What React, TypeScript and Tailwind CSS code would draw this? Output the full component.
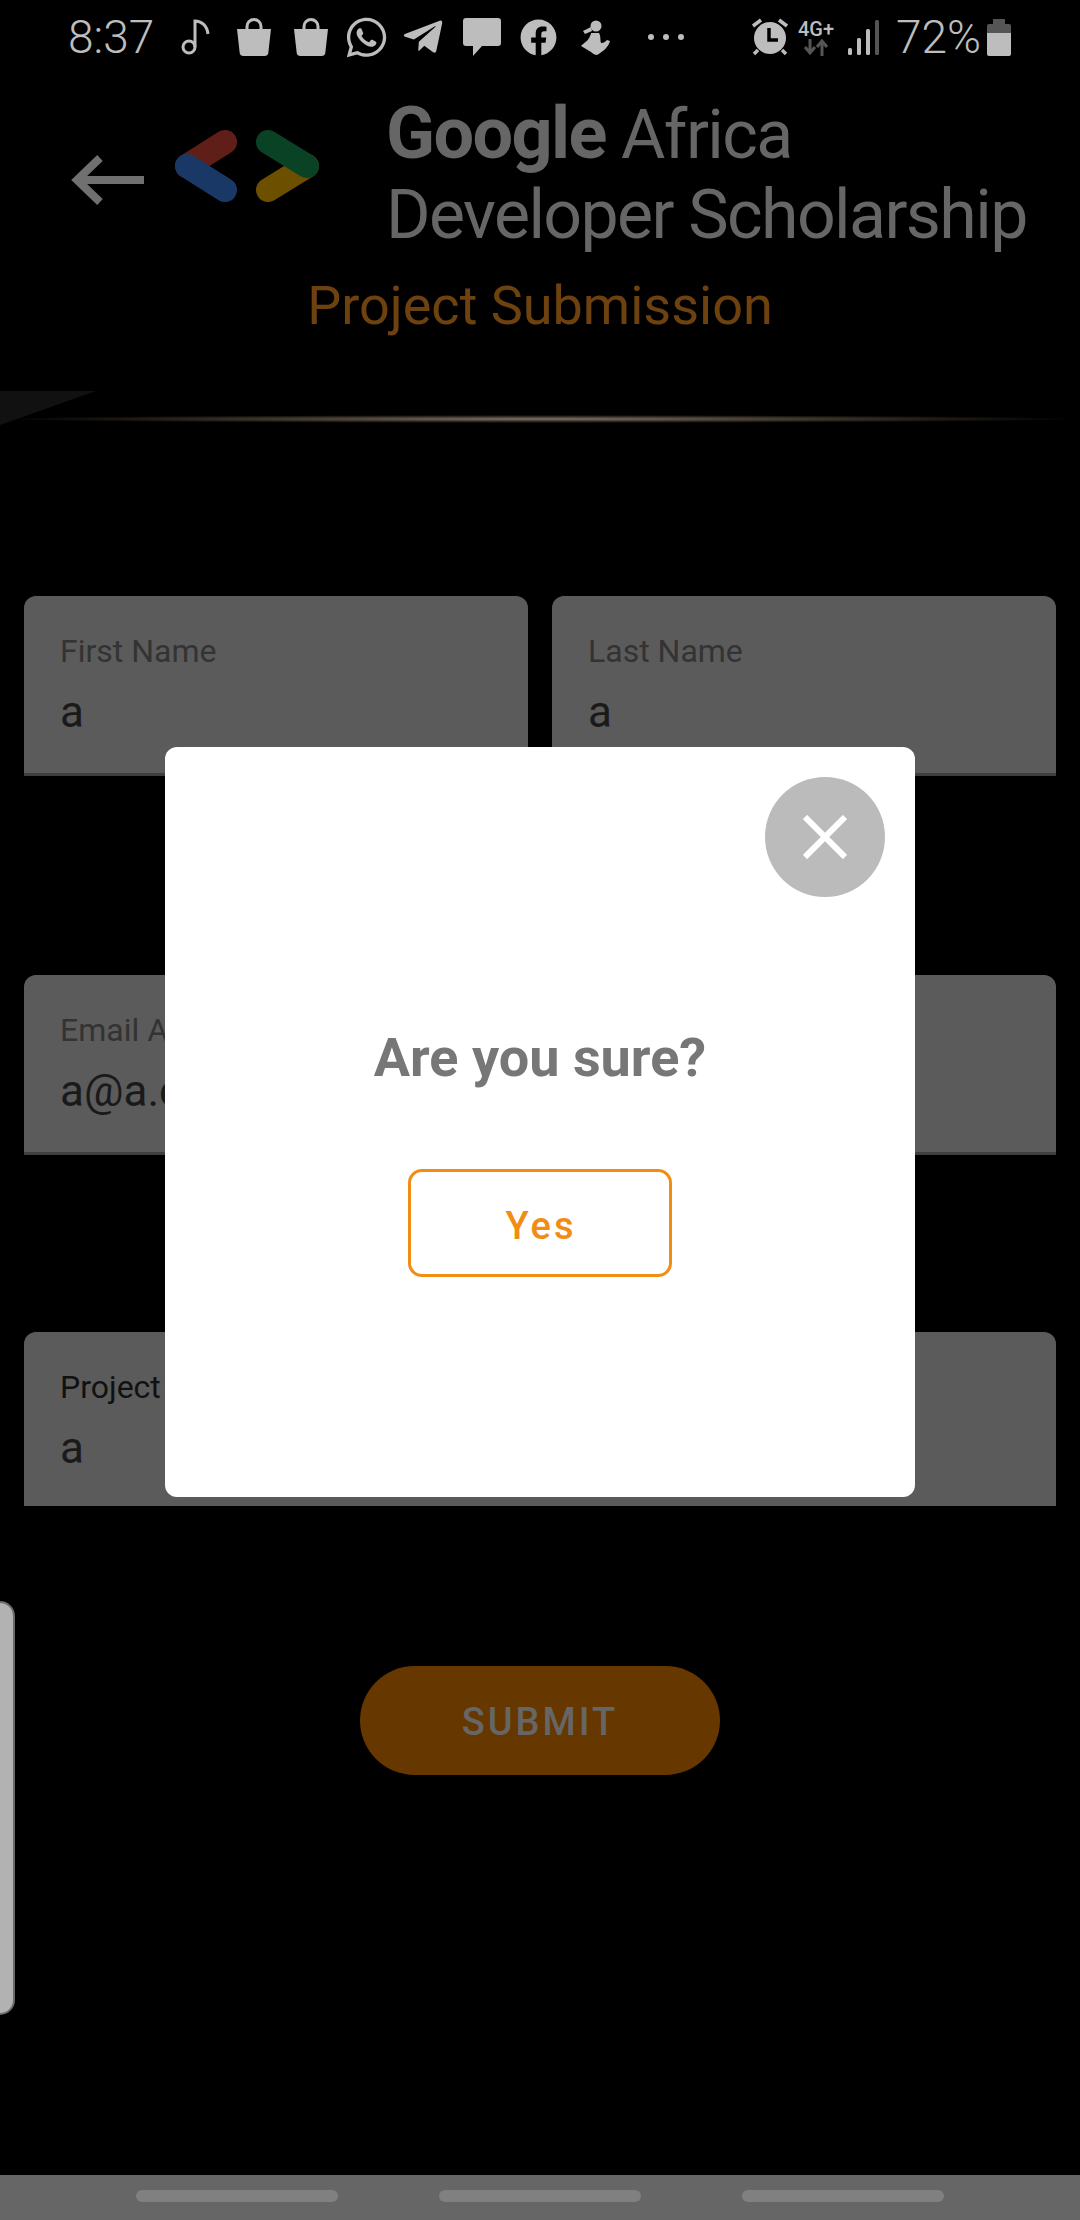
import { FaWhatsapp, FaTelegramPlane, FaFacebook } from "react-icons/fa";

function Bag() {
  return (
    <svg width="36" height="38" viewBox="0 0 36 38" className="shrink-0">
      <path d="M11 12V8.500a7 7 0 0 1 14 0V12" fill="none" stroke="#bdbdbd" strokeWidth="3" />
      <path d="M1 11h34l-2.600 23a4 4 0 0 1-4 4H7.600a4 4 0 0 1-4-4z" fill="#bdbdbd" />
    </svg>
  );
}

function StatusBar() {
  return (
    <div className="flex h-[74px] items-center pl-[68px] text-[#bdbdbd]">
      <span className="w-[84px] text-[46px] leading-[74px] font-light whitespace-nowrap">8:37</span>
      <svg width="29" height="37" viewBox="0 0 29 37" className="ml-[29px] shrink-0">
        <circle cx="8" cy="28" r="6" fill="none" stroke="#bdbdbd" strokeWidth="3" />
        <path d="M14 28V2c6 0 12 4 13 13" fill="none" stroke="#bdbdbd" strokeWidth="3" />
      </svg>
      <div className="ml-[26px]"><Bag /></div>
      <div className="ml-[21px]"><Bag /></div>
      <FaWhatsapp className="ml-[15px] shrink-0 text-[45px]" />
      <FaTelegramPlane className="ml-[12px] shrink-0 text-[44px]" />
      <svg width="38" height="38" viewBox="0 0 38 38" className="ml-[18px] shrink-0">
        <path d="M3 0h32a3 3 0 0 1 3 3v22a3 3 0 0 1-3 3H19l-9 10v-10H3a3 3 0 0 1-3-3V3a3 3 0 0 1 3-3z" fill="#bdbdbd" />
      </svg>
      <FaFacebook className="ml-[19px] shrink-0 text-[37px]" />
      <svg width="30" height="35" viewBox="0 0 30 35" className="ml-[23px] shrink-0">
        <circle cx="16" cy="6" r="5.500" fill="#bdbdbd" />
        <path d="M3 11l8-4 1 4-7 3z" fill="#bdbdbd" />
        <path d="M11 13h8c2 3 1 7 2 10 3 0 4-1 6-3l3 1c-1 5-6 10-13 14-2 0-4-1-6-3l-10-6c3-3 8-6 9-10 1-2 1-2 1-3z" fill="#bdbdbd" />
      </svg>
      <div className="ml-[38px] flex gap-[9px]">
        <span className="size-[6px] rounded-full bg-[#bdbdbd]" />
        <span className="size-[6px] rounded-full bg-[#bdbdbd]" />
        <span className="size-[6px] rounded-full bg-[#bdbdbd]" />
      </div>
      <svg width="38" height="38" viewBox="0 0 38 38" className="ml-[67px] shrink-0">
        <circle cx="19" cy="20" r="16" fill="#bdbdbd" />
        <path d="M18 10v12h9" fill="none" stroke="#000" strokeWidth="3.500" />
        <path d="M10 2L2 8M28 2l8 6M7 32l-4 4M31 32l4 4" fill="none" stroke="#bdbdbd" strokeWidth="3.500" />
      </svg>
      <div className="ml-[9px] flex w-[36px] flex-col items-center">
        <span className="text-[20px] leading-[20px] font-medium whitespace-nowrap">4G+</span>
        <svg width="26" height="17" viewBox="0 0 26 17">
          <path d="M7 0v13M2 8l5 6 5-6" fill="none" stroke="#555" strokeWidth="3" />
          <path d="M19 17V3M14 8l5-6 5 6" fill="none" stroke="#555" strokeWidth="3" />
        </svg>
      </div>
      <svg width="32" height="35" viewBox="0 0 32 35" className="ml-[14px] shrink-0">
        <rect x="0" y="28" width="4" height="7" rx="1.500" fill="#bdbdbd" />
        <rect x="9" y="18" width="4" height="17" rx="1.500" fill="#bdbdbd" />
        <rect x="18" y="9" width="4" height="26" rx="1.500" fill="#bdbdbd" />
        <rect x="27" y="0" width="4" height="35" rx="1.500" fill="#555" />
      </svg>
      <span className="ml-[16px] w-[85px] text-[46px] leading-[74px] font-light whitespace-nowrap">72%</span>
      <svg width="24" height="37" viewBox="0 0 24 37" className="ml-[6px] shrink-0">
        <path d="M6 0h12v5h4a2 2 0 0 1 2 2v7H0V7a2 2 0 0 1 2-2h4z" fill="#555" />
        <path d="M0 14h24v21a2 2 0 0 1-2 2H2a2 2 0 0 1-2-2z" fill="#bdbdbd" />
      </svg>
    </div>
  );
}

function Header() {
  return (
    <div className="flex h-[202px] items-start">
      <svg width="74" height="50" viewBox="0 0 74 50" className="mt-[81px] ml-[71px] shrink-0">
        <path d="M73 25H6M29 3L6 25l23 22" fill="none" stroke="#707070" strokeWidth="8" />
      </svg>
      <svg width="150" height="76" viewBox="0 0 150 76" className="mt-[54px] ml-[28px] shrink-0">
        <g fill="none" strokeWidth="24" strokeLinecap="round">
          <path d="M14 38L52 14" stroke="#5f1f18" />
          <path d="M14 38L52 62" stroke="#1a3866" />
          <path d="M95 62L134 38" stroke="#6c5000" />
          <path d="M95 14L134 38" stroke="#0a4225" />
        </g>
      </svg>
      <div className="mt-[20px] ml-[63px] text-[68px] leading-[80px] font-normal tracking-[-1.600px] whitespace-nowrap text-[#666666]">
        <div>
          <span className="text-[72px] font-bold">Google</span> Africa
        </div>
        <div>Developer Scholarship</div>
      </div>
    </div>
  );
}

function Field({ label, value, labelTone, underline }: { label: string; value: string; labelTone: string; underline: boolean }) {
  return (
    <div className={`flex flex-col rounded-t-[12px] bg-[#5b5b5b] pt-[37px] pl-[36px] ${underline ? "h-[180px] border-b-[3px] border-[#3f3f3f]" : "h-[174px]"}`}>
      <span className={`text-[32px] leading-[36px] ${labelTone}`}>{label}</span>
      <span className="mt-[19px] text-[44px] leading-[48px] text-[#1a1a1a]">{value}</span>
    </div>
  );
}

export default function App() {
  return (
    <div className="relative flex h-[2220px] w-[1080px] flex-col overflow-hidden bg-black [font-family:Roboto,sans-serif]">
      <StatusBar />
      <Header />
      <h1 className="text-center text-[54px] leading-[60px] font-normal text-[#6e420f]">Project Submission</h1>

      <div className="relative mt-[79px] h-[8px] bg-[radial-gradient(ellipse_closest-side,#7a756a_0%,#4a4238_40%,#1a1510_80%,#000000_100%)]">
        <div className="absolute top-[-24px] left-0 h-[34px] w-[96px] bg-[#111111] [clip-path:polygon(0_0,100%_0,0_100%)]" />
      </div>

      <div className="mt-[173px] flex flex-col px-[24px]">
        <div className="grid grid-cols-2 gap-x-[24px]">
          <Field label="First Name" value="a" labelTone="text-[#333333]" underline />
          <Field label="Last Name" value="a" labelTone="text-[#333333]" underline />
        </div>
        <div className="mt-[199px]">
          <Field label="Email Address" value="a@a.com" labelTone="text-[#333333]" underline />
        </div>
        <div className="mt-[177px]">
          <Field label="Project Link" value="a" labelTone="text-[#111111]" underline={false} />
        </div>
      </div>

      <div className="mt-[160px] flex justify-center">
        <div className="flex h-[109px] w-[360px] items-center justify-center rounded-full bg-[#663800] pt-[3px] text-[38px] font-medium tracking-[3px] text-[#666666]">
          SUBMIT
        </div>
      </div>

      <div className="mt-auto flex h-[45px] items-center justify-center gap-[101px] bg-[#666666] pb-[4px]">
        <span className="h-[12px] w-[202px] rounded-full bg-[#808080]" />
        <span className="h-[12px] w-[202px] rounded-full bg-[#808080]" />
        <span className="h-[12px] w-[202px] rounded-full bg-[#808080]" />
      </div>

      <div className="absolute top-[1601px] left-0 h-[414px] w-[15px] rounded-r-[16px] border-2 border-l-0 border-[#6a6a6a] bg-[#b2b2b2]" />

      <div className="absolute top-[747px] left-[165px] flex h-[750px] w-[750px] flex-col items-center rounded-[12px] bg-white">
        <div className="absolute top-[30px] right-[30px] flex size-[120px] items-center justify-center rounded-full bg-[#bbbbbb]">
          <svg width="44" height="44" viewBox="0 0 44 44">
            <path d="M2 2l40 40M42 2L2 42" fill="none" stroke="#ffffff" strokeWidth="6" />
          </svg>
        </div>
        <h2 className="mt-[278px] text-[54px] leading-[66px] font-bold text-[#777777]">Are you sure?</h2>
        <div className="mt-[78px] flex h-[108px] w-[264px] items-center justify-center rounded-[14px] border-[3px] border-[#f28c13] pt-[6px] pl-[2px] text-[38px] font-medium tracking-[3px] text-[#f28c13]">
          Yes
        </div>
      </div>
    </div>
  );
}
